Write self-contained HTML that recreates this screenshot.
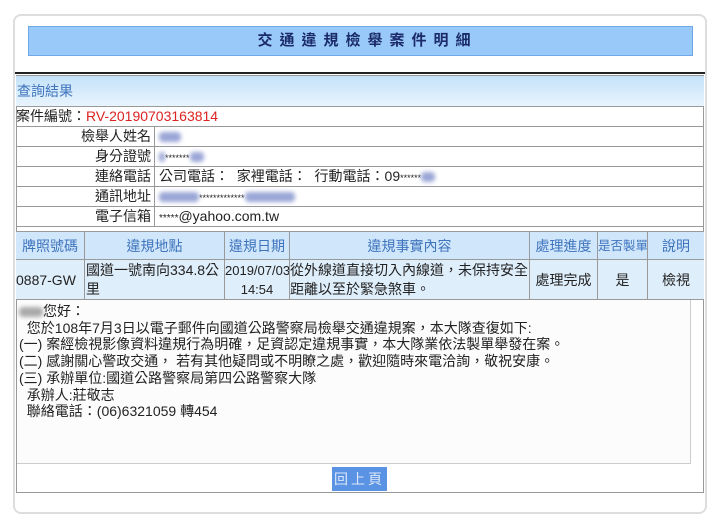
<!DOCTYPE html>
<html><head><meta charset="utf-8"><style>
*{margin:0;padding:0;box-sizing:border-box}
body{width:720px;height:498px;background:#fff;font-family:"Liberation Sans","Noto Sans CJK TC",sans-serif;font-size:14px;color:#222;position:relative;overflow:hidden}
.a{position:absolute}
.outer{left:13px;top:14px;width:694px;height:500px;border:2px solid #ddd;border-radius:8px}
.title{left:28px;top:26px;width:665px;height:30px;background:#99c9f8;border:1px solid #6fa8e6;text-align:center;line-height:28px;font-size:15px;font-weight:bold;letter-spacing:7px;padding-left:14px;color:#1a2a6a}
.bl{left:15px;top:72px;width:690px;height:2px;background:#222}
.tb{left:16px;top:75px;width:688px;height:418px;border:1px solid #999}
.hd{left:16px;top:76px;width:688px;height:31px;background:linear-gradient(#c4e2fa,#e8f4fd);border-bottom:1px solid #999;color:#3f74bd;line-height:30px;padding-left:1px;font-size:14px}
.row{left:16px;width:688px;height:20px;border-bottom:1px solid #999;line-height:19px;white-space:nowrap}
.lab{position:absolute;left:0;width:139px;text-align:right;padding-right:3px;border-right:1px solid #999;height:19px}
.val{position:absolute;left:143px}
.blur{display:inline-block;height:10px;background:#9aa6d6;filter:blur(2px);vertical-align:middle;border-radius:4px}
.th{top:231px;height:29px;background:#cfe6fb;border-right:1px solid #999;border-bottom:1px solid #999;border-top:1px solid #999;color:#3f74bd;text-align:center;line-height:28px;white-space:nowrap;overflow:hidden}
.td{top:260px;height:40px;background:#dfeefb;border-right:1px solid #999;border-bottom:1px solid #999;line-height:19px;padding-top:1px;white-space:nowrap;overflow:hidden}
.ta{left:17px;top:300px;width:674px;height:164px;border-right:1px solid #ccc;border-bottom:1px solid #ccc;background:#fcfcfc;line-height:16.7px;padding:3px 0 0 2px;font-size:14px;white-space:nowrap}
.btn{left:332px;top:467px;width:55px;height:24px;background:#5b93e4;color:#dde8f8;text-align:center;line-height:24px;letter-spacing:3px}
</style></head><body>
<div class="a outer"></div>
<div class="a title">交通違規檢舉案件明細</div>
<div class="a bl"></div>
<div class="a tb"></div>
<div class="a hd">查詢結果</div>
<div class="a row" style="top:107px">案件編號：<span style="color:#d22">RV-20190703163814</span></div>
<div class="a row" style="top:127px"><div class="lab">檢舉人姓名</div><div class="val"><span class="blur" style="width:22px"></span></div></div>
<div class="a row" style="top:147px"><div class="lab">身分證號</div><div class="val"><span class="blur" style="width:6px"></span><span style="font-size:9px">*******</span><span class="blur" style="width:14px"></span></div></div>
<div class="a row" style="top:167px"><div class="lab">連絡電話</div><div class="val">公司電話：&nbsp;&nbsp;家裡電話：&nbsp;&nbsp;行動電話：09<span style="font-size:9px">******</span><span class="blur" style="width:14px"></span></div></div>
<div class="a row" style="top:187px"><div class="lab">通訊地址</div><div class="val"><span class="blur" style="width:40px"></span><span style="font-size:9px">*************</span><span class="blur" style="width:50px"></span></div></div>
<div class="a row" style="top:207px"><div class="lab">電子信箱</div><div class="val"><span style="font-size:10px">*****</span>@yahoo.com.tw</div></div>
<div class="a th" style="left:16px;width:69px">牌照號碼</div>
<div class="a th" style="left:85px;width:140px">違規地點</div>
<div class="a th" style="left:225px;width:65px">違規日期</div>
<div class="a th" style="left:290px;width:240px">違規事實內容</div>
<div class="a th" style="left:530px;width:68px">處理進度</div>
<div class="a th" style="left:598px;width:50px;font-size:12.5px">是否製單</div>
<div class="a th" style="left:648px;width:56px;border-right:none">說明</div>
<div class="a td" style="left:16px;width:69px;line-height:38px">0887-GW</div>
<div class="a td" style="left:85px;width:140px;padding-left:1px">國道一號南向334.8公<br>里</div>
<div class="a td" style="left:225px;width:65px;text-align:center;font-size:13px">2019/07/03<br>14:54</div>
<div class="a td" style="left:290px;width:240px">從外線道直接切入內線道，未保持安全<br>距離以至於緊急煞車。</div>
<div class="a td" style="left:530px;width:68px;text-align:center;line-height:38px">處理完成</div>
<div class="a td" style="left:598px;width:50px;text-align:center;line-height:38px">是</div>
<div class="a td" style="left:648px;width:56px;text-align:center;line-height:38px;border-right:none">檢視</div>
<div class="a ta"><span class="blur" style="width:24px;background:#aaa"></span>您好：<br>&nbsp;&nbsp;您於108年7月3日以電子郵件向國道公路警察局檢舉交通違規案，本大隊查復如下:<br>(一) 案經檢視影像資料違規行為明確，足資認定違規事實，本大隊業依法製單舉發在案。<br>(二) 感謝關心警政交通， 若有其他疑問或不明瞭之處，歡迎隨時來電洽詢，敬祝安康。<br>(三) 承辦單位:國道公路警察局第四公路警察大隊<br>&nbsp;&nbsp;承辦人:莊敬志<br>&nbsp;&nbsp;聯絡電話：(06)6321059 轉454</div>
<div class="a btn">回上頁</div>
</body></html>
